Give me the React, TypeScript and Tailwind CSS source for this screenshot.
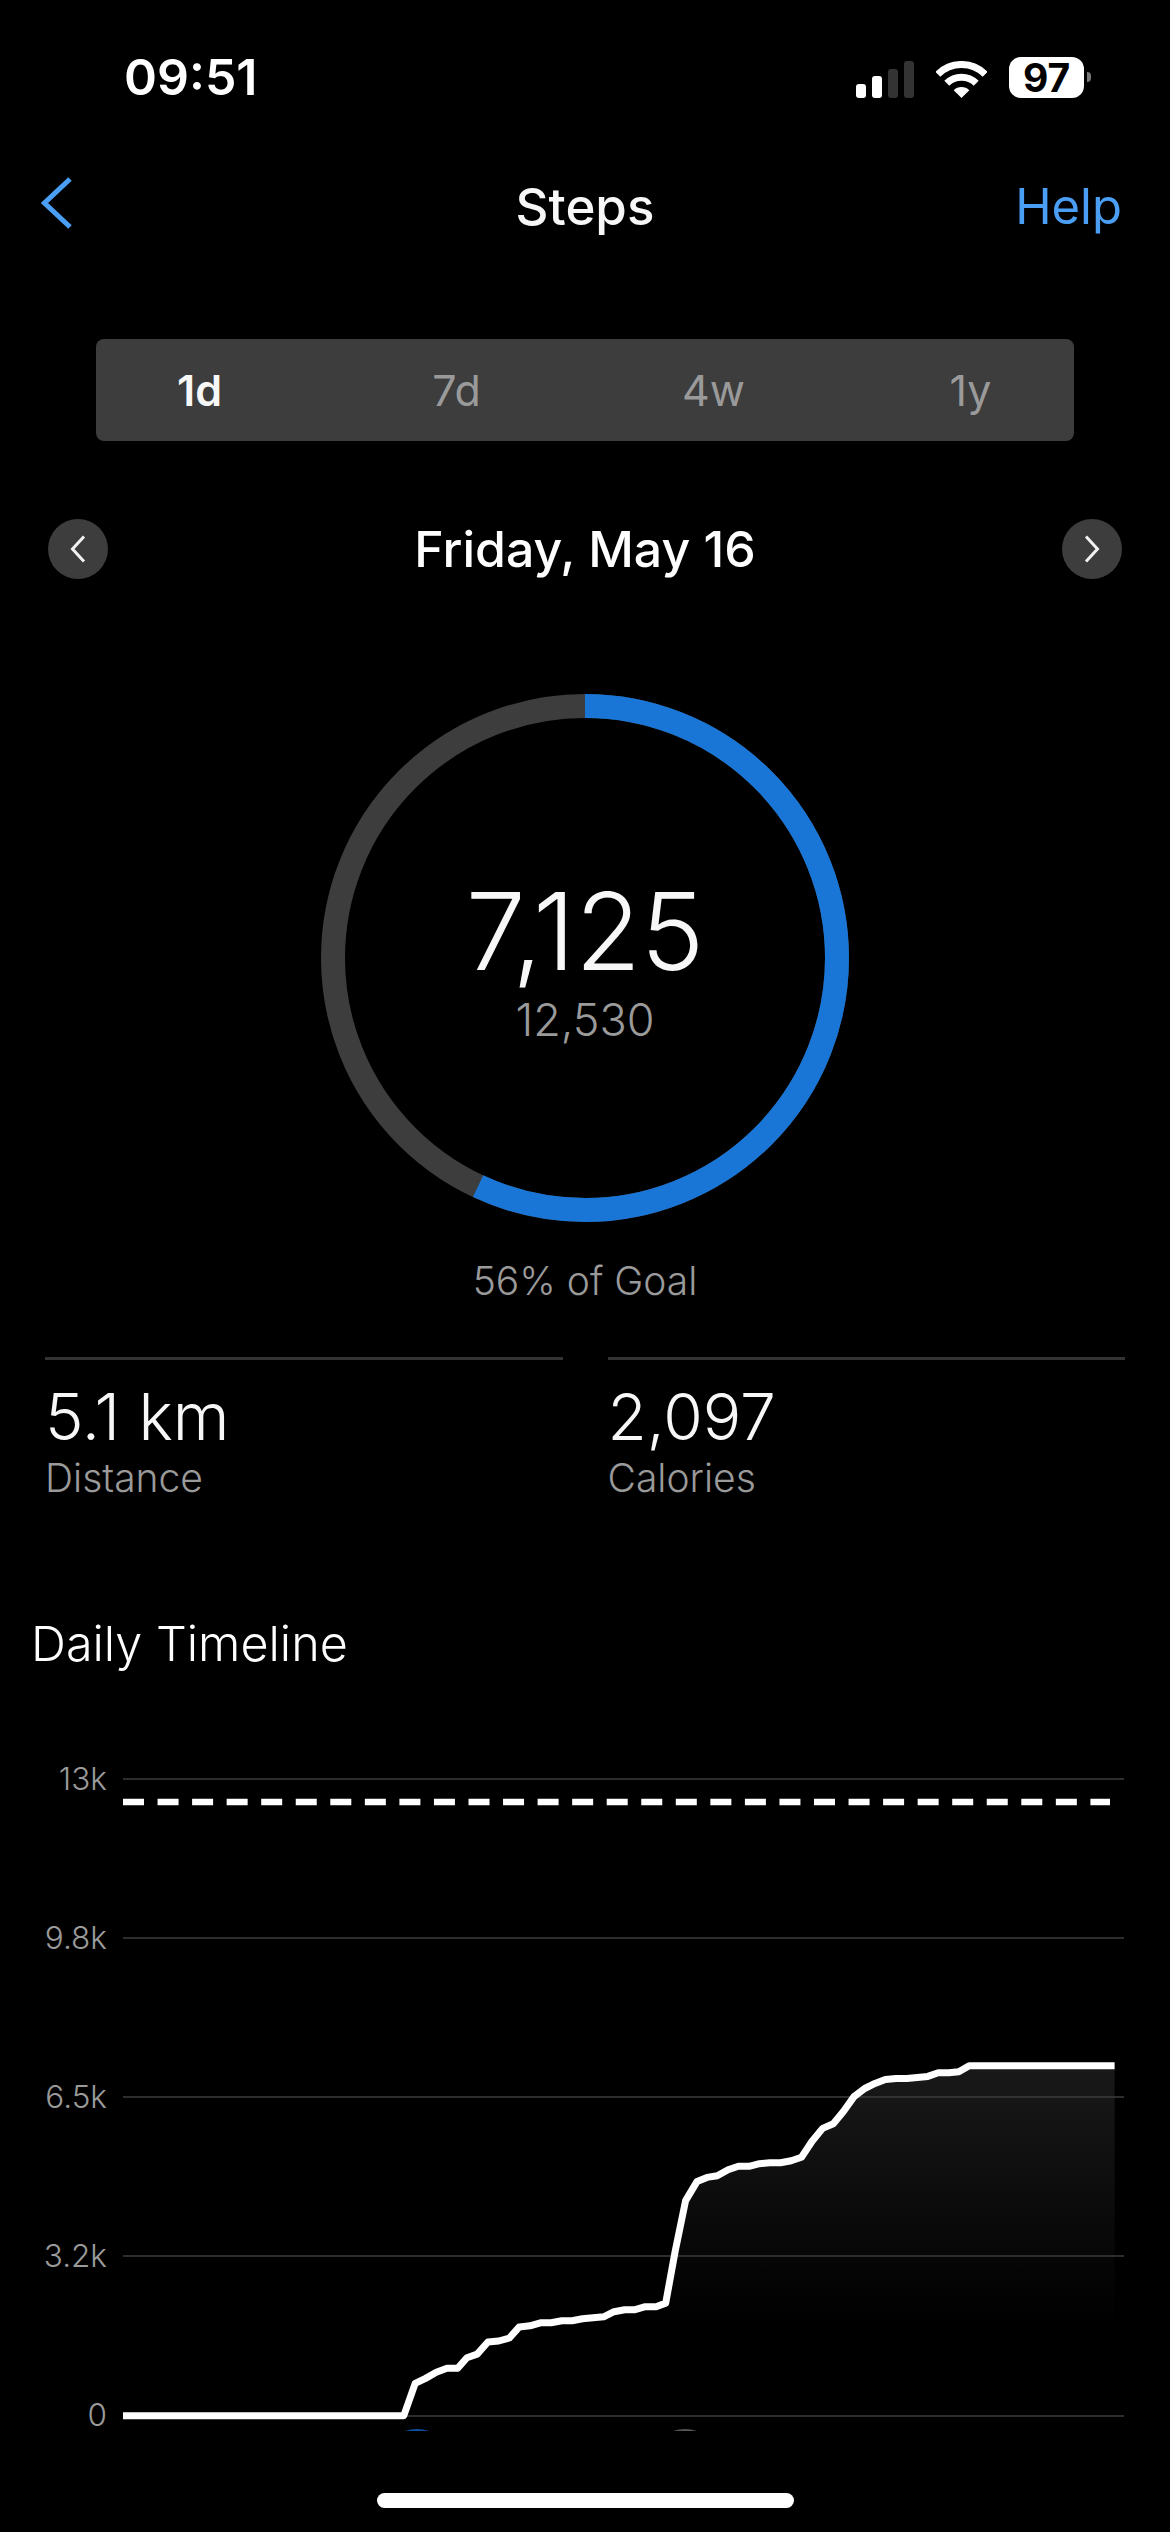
const left: [number, number][] = [[321,1336],[1055,1336],[1085,1272],[1112,1262],[1140,1250],[1168,1242],[1196,1242],[1220,1221],[1247,1214],[1275,1190],[1303,1188],[1331,1182],[1357,1160],[1385,1158],[1412,1152],[1440,1152],[1468,1148],[1495,1148],[1522,1144]];
const right: [number, number][] = [[88,1140],[115,1130],[143,1126],[170,1126],[197,1120],[225,1120],[250,1113],[275,1010],[302,910],[332,872],[358,864],[385,861],[413,849],[440,842],[468,842],[495,837],[522,835],[550,835],[578,831],[605,824],[632,793],[660,767],[688,758],[715,733],[742,704],[770,688],[797,678],[824,670],[852,668],[880,668],[935,664],[962,657],[990,657],[1016,655],[1043,643],[1423,643]];
const pts = [
  ...left.map(([x, y]) => [x / 2.613, 1740 + y / 1.98]),
  ...right.map(([x, y]) => [570 + x / 2.613, 1740 + y / 1.98]),
].map(([x, y]) => `${x.toFixed(1)},${y.toFixed(1)}`);
const line = "M" + pts.join(" L");
const area = line + " L1114.6,2415 L420,2415 Z";

const ticks = ["13k", "9.8k", "6.5k", "3.2k", "0"];
const gridY = [1778, 1937, 2096, 2255, 2415];
const R = 252;
const C = 2 * Math.PI * R;

function Chevron({ dir }: { dir: "l" | "r" }) {
  return (
    <svg width="16" height="28" viewBox="0 0 16 28" fill="none">
      <path d={dir === "l" ? "M14 1.5 L2.5 14 L14 26.5" : "M2 1.5 L13.5 14 L2 26.5"} stroke="#f2f2f2" strokeWidth="3" />
    </svg>
  );
}

export default function App() {
  return (
    <div className="relative h-[2532px] w-[1170px] overflow-hidden bg-black font-[Inter,sans-serif] text-[#f7f7f7]">
      {/* status bar */}
      <div className="flex h-[154px] items-center pl-[124px]">
        <span className="text-[50px] leading-none font-semibold text-white">09:51</span>
        <div className="ml-auto flex items-end gap-[6px] pr-[79px]">
          <div className="flex items-end gap-[6px]">
            <div className="h-[14px] w-[10px] rounded-[3px] bg-white" />
            <div className="h-[22px] w-[10px] rounded-[3px] bg-white" />
            <div className="h-[29px] w-[10px] rounded-[3px] bg-[#333333]" />
            <div className="h-[37px] w-[10px] rounded-[3px] bg-[#333333]" />
          </div>
          <svg className="ml-[16px]" width="51" height="37" viewBox="0 0 51 37" fill="none">
            <path d="M1.8 13.3 A33.5 33.5 0 0 1 49.2 13.3" stroke="white" strokeWidth="7" />
            <path d="M10.8 22.3 A20.8 20.8 0 0 1 40.2 22.3" stroke="white" strokeWidth="7" />
            <path d="M25.5 37 L17.7 29.2 A11 11 0 0 1 33.3 29.2 Z" fill="white" />
          </svg>
          <div className="ml-[16px] flex items-center self-center">
            <div className="flex h-[41px] w-[75px] items-center justify-center rounded-[12px] bg-white text-[39px] leading-none font-bold text-black">97</div>
            <div className="ml-[3px] h-[10px] w-[4px] rounded-r-[4px] bg-[#777777]" />
          </div>
        </div>
      </div>

      {/* nav */}
      <div className="grid h-[104px] grid-cols-[1fr_auto_1fr] items-center px-[48px]">
        <svg className="mb-[6px] ml-[-7px]" width="31" height="52" viewBox="0 0 31 52" fill="none">
          <path d="M29 2 L3.5 26 L29 50" stroke="#4a9ff5" strokeWidth="5" />
        </svg>
        <span className="text-[51px] leading-none font-medium">Steps</span>
        <span className="text-right text-[49px] leading-none text-[#4a9ff5]">Help</span>
      </div>

      {/* segmented */}
      <div className="mx-[96px] mt-[81px] h-[102px] rounded-[8px] bg-[#3d3d3d]">
        <div className="mx-[-25px] grid h-full grid-cols-4 items-center text-center text-[43px] leading-none text-[#9a9a9a]">
          <span className="font-semibold text-[#f7f7f7]">1d</span>
          <span>7d</span>
          <span>4w</span>
          <span>1y</span>
        </div>
      </div>

      {/* date */}
      <div className="mt-[78px] flex h-[60px] items-center justify-between px-[48px]">
        <div className="flex h-[60px] w-[60px] items-center justify-center rounded-full bg-[#3d3d3d]"><Chevron dir="l" /></div>
        <span className="text-[50px] leading-none font-medium text-white">Friday, May 16</span>
        <div className="flex h-[60px] w-[60px] items-center justify-center rounded-full bg-[#3d3d3d]"><Chevron dir="r" /></div>
      </div>

      {/* ring */}
      <div className="relative mx-auto mt-[115px] h-[528px] w-[528px]">
        <svg width="528" height="528" viewBox="0 0 528 528" fill="none">
          <circle cx="264" cy="264" r={R} stroke="#3d3d3d" strokeWidth="24" />
          <circle cx="264" cy="264" r={R} stroke="#1976d6" strokeWidth="24" strokeDasharray={`${C * 0.5695} ${C}`} transform="rotate(-90 264 264)" />
        </svg>
        <div className="absolute inset-0 flex flex-col items-center pt-[182px]">
          <span className="text-[107px] leading-[110px] font-light">7,125</span>
          <span className="mt-[9px] text-[45px] leading-[50px] font-light text-[#9a9a9a]">12,530</span>
        </div>
      </div>
      <div className="mt-[37px] text-center text-[39px] leading-[44px] font-light text-[#9a9a9a]">56% of Goal</div>

      {/* stats */}
      <div className="mt-[54px] grid grid-cols-2 gap-[45px] px-[45px]">
        <div className="border-t-[3px] border-[#333333] pt-[18px]">
          <div className="text-[65px] leading-[78px] font-light">5.1 km</div>
          <div className="text-[39px] leading-[44px] font-light text-[#9a9a9a]">Distance</div>
        </div>
        <div className="border-t-[3px] border-[#333333] pt-[18px]">
          <div className="text-[64px] leading-[78px] font-light">2,097</div>
          <div className="text-[39px] leading-[44px] font-light text-[#9a9a9a]">Calories</div>
        </div>
      </div>

      <div className="mt-[116px] pl-[31px] text-[48.5px] leading-[56px] font-light text-white">Daily Timeline</div>

      {/* chart */}
      <div className="mt-[87px] flex">
        <div className="flex w-[123px] flex-col gap-[119px] pr-[16px] text-right text-[31.5px] leading-[40px] font-light text-[#9a9a9a]">
          {ticks.map((t) => (
            <div key={t} className="h-[40px]">{t}</div>
          ))}
        </div>
        <svg className="mt-[12px]" width="1047" height="660" viewBox="123 1770 1047 660" fill="none">
          <defs>
            <linearGradient id="fade" x1="0" y1="2062" x2="0" y2="2325" gradientUnits="userSpaceOnUse">
              <stop offset="0" stopColor="#ffffff" stopOpacity="0.1" />
              <stop offset="1" stopColor="#ffffff" stopOpacity="0" />
            </linearGradient>
          </defs>
          <path d={area} fill="url(#fade)" />
          {gridY.map((y) => (
            <line key={y} x1="123" x2="1124" y1={y} y2={y} stroke="#3c3c3c" strokeWidth="1.5" />
          ))}
          <line x1="123" x2="1110" y1="1801" y2="1801" stroke="white" strokeWidth="6.5" strokeDasharray="21 13.55" />
          <path d={line} stroke="white" strokeWidth="7" strokeLinejoin="round" />
          <circle cx="417" cy="2465" r="37" fill="#0b4fa3" />
          <circle cx="685" cy="2465" r="37" fill="#555555" />
        </svg>
      </div>

      {/* home indicator */}
      <div className="absolute top-[2493px] left-[377px] h-[15px] w-[417px] rounded-full bg-white" />
    </div>
  );
}
